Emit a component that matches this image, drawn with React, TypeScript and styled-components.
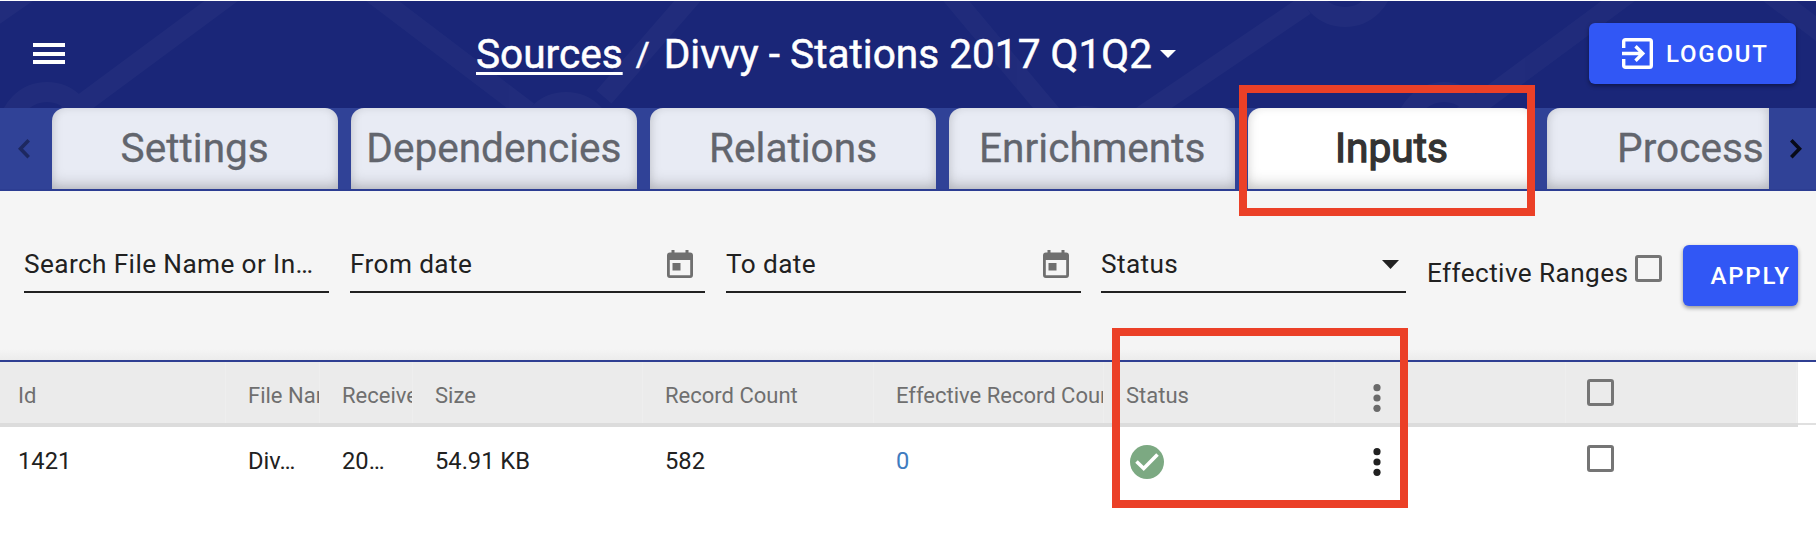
import React from "react";
import styled, { createGlobalStyle } from "styled-components";

const Global = createGlobalStyle`
  * { box-sizing: border-box; }
  body { margin: 0; background: #fff; font-family: Roboto, "Liberation Sans", sans-serif; color: #212121; }
`;

const Page = styled.div`
  position: relative;
  width: 1816px;
  height: 548px;
  overflow: hidden;
  padding-top: 1px;
  background: #fff;
`;

const Header = styled.header`
  position: relative;
  display: flex;
  align-items: center;
  justify-content: space-between;
  height: 107px;
  padding: 0 20px 2px 33px;
  background: #1a2678;
`;

const Pattern = styled.svg`
  position: absolute;
  inset: 0;
`;

const MenuButton = styled.div`
  position: relative;
  display: flex;
  flex-direction: column;
  gap: 4.5px;
  width: 443px;
`;

const MenuBar = styled.span`
  width: 32px;
  height: 4px;
  background: #fff;
`;

const Title = styled.h1`
  position: relative;
  display: flex;
  align-items: center;
  margin: 0;
  flex: 1;
  color: #fff;
  font-size: 40.6px;
  line-height: 48px;
  font-weight: 400;
  white-space: pre;
  -webkit-text-stroke: 0.5px #fff;
`;

const Crumb = styled.a`
  height: 48px;
  text-decoration: underline;
  text-decoration-thickness: 3px;
  text-underline-offset: 4px;
`;

const Slash = styled.span`
  margin: 0 14px 0 13px;
  font-size: 34px;
`;

const Caret = styled.svg`
  margin-left: 8px;
`;

const Button = styled.button<{ $w: number; $pl: number }>`
  position: relative;
  display: flex;
  align-items: center;
  gap: 13px;
  flex: none;
  width: ${(p) => p.$w}px;
  height: 61px;
  padding: 0 0 0 ${(p) => p.$pl}px;
  border: 0;
  border-radius: 6px;
  background: #3157f5;
  color: #fff;
  font: 500 24px/30px Roboto, sans-serif;
  letter-spacing: 1.8px;
  box-shadow: 0 2px 4px rgba(0, 0, 0, 0.4);
`;

const TabBar = styled.nav`
  display: flex;
  height: 83px;
  background: #304297;
  border-bottom: 2px solid #2c3d92;
`;

const Arrow = styled.div<{ $w: number; $pl: number }>`
  display: flex;
  flex: none;
  align-items: center;
  width: ${(p) => p.$w}px;
  padding-left: ${(p) => p.$pl}px;
`;

const TabStrip = styled.div`
  display: flex;
  flex: none;
  gap: 12.8px;
  width: 1717.5px;
  overflow: hidden;
`;

const Tab = styled.div<{ $active?: boolean; $cut?: boolean }>`
  flex: none;
  width: ${(p) => (p.$cut ? 222 : 286.4)}px;
  height: 81px;
  padding-left: ${(p) => (p.$cut ? 64 : 0)}px;
  border-radius: ${(p) => (p.$cut ? "13px 0 0 0" : "13px 13px 0 0")};
  background: ${(p) => (p.$active ? "#fff" : "#e8ebf4")};
  box-shadow: inset 0 -8px 15px -4px rgba(0, 0, 0, 0.2), inset 0 0 10px rgba(0, 0, 0, 0.09);
  color: ${(p) => (p.$active ? "#333" : "#62656d")};
  font-size: 40.6px;
  line-height: 80px;
  text-align: center;
  white-space: nowrap;
  -webkit-text-stroke: ${(p) => (p.$active ? "1.3px #333" : "0.3px #62656d")};
`;

const Filters = styled.section`
  display: flex;
  height: 169px;
  padding: 0 0 0 24px;
  background: linear-gradient(#f5f5f5 158px, #ececec);
`;

const Field = styled.div<{ $w: number; $gap: number }>`
  display: flex;
  align-items: center;
  justify-content: space-between;
  width: ${(p) => p.$w}px;
  height: 56px;
  margin: 46px ${(p) => p.$gap}px 0 0;
  border-bottom: 2px solid #212121;
  font-size: 26.2px;
  letter-spacing: 0.4px;
  line-height: 54px;
  white-space: nowrap;
`;

const IconSlot = styled.span<{ $r: number }>`
  display: flex;
  margin-right: ${(p) => p.$r}px;
`;

const RangeLabel = styled.div`
  width: 208px;
  margin-top: 66px;
  font-size: 26.2px;
  letter-spacing: 0.4px;
  line-height: 32px;
  white-space: nowrap;
`;

const Check = styled.span<{ $top: number }>`
  display: block;
  flex: none;
  width: 27px;
  height: 27px;
  margin-top: ${(p) => p.$top}px;
  border: 3px solid #757575;
  border-radius: 3px;
`;

const ApplySlot = styled.div`
  margin: 54px 0 0 21px;
`;

const Table = styled.div`
  border-top: 2px solid #2f3f92;
`;

const HeadWrap = styled.div`
  height: 63px;
  border-bottom: 2px solid #e0e0e0;
`;

const cols = "226px 94px 93px 230px 231px 230px 231px 231px 231px";

const HeadRow = styled.div`
  display: grid;
  grid-template-columns: ${cols};
  width: 1798px;
  height: 65px;
  background: #ebebeb;
  border-bottom: 4px solid #dcdcdc;
`;

const Row = styled.div`
  display: grid;
  grid-template-columns: ${cols};
  width: 1798px;
  height: 72px;
`;

const HeadCell = styled.div<{ $pl?: number }>`
  display: flex;
  padding-left: ${(p) => p.$pl ?? 22}px;
  overflow: hidden;
  border-right: 1px solid #eeeeee;
  color: #6f6f6f;
  font-size: 22px;
  line-height: 67px;
  white-space: nowrap;
`;

const Cell = styled.div<{ $pl?: number; $link?: boolean }>`
  display: flex;
  padding-left: ${(p) => p.$pl ?? 22}px;
  overflow: hidden;
  color: ${(p) => (p.$link ? "#3f7cbf" : "#212121")};
  font-size: 23.7px;
  line-height: 72px;
  white-space: nowrap;
`;

const Highlight = styled.div<{ $x: number; $y: number; $h: number }>`
  position: absolute;
  left: ${(p) => p.$x}px;
  top: ${(p) => p.$y}px;
  width: 296px;
  height: ${(p) => p.$h}px;
  border: 8px solid #eb4027;
`;

const Chevron = ({ flip, color }: { flip?: boolean; color: string }) => (
  <svg width="12" height="20" viewBox="0 0 12 20" fill="none" stroke={color} strokeWidth="3.6">
    <path d={flip ? "M1.3 1.3 9.5 9.7 1.3 18.2" : "M10.7 1.3 2.5 9.7 10.7 18.2"} />
  </svg>
);

const Calendar = () => (
  <svg width="26" height="28" viewBox="0 0 26 28" fill="none">
    <rect x="1.4" y="4" width="23.2" height="22.6" rx="1.5" stroke="#6f6f6f" strokeWidth="2.8" />
    <path d="M1 3h24v7H1zM4.5 0h3v4h-3zM18.5 0h3v4h-3z" fill="#6f6f6f" />
    <path d="M5.5 13h8v7.5h-8z" fill="#6f6f6f" />
  </svg>
);

const Dots = ({ color }: { color: string }) => (
  <svg width="8" height="28" viewBox="0 0 8 28" fill={color}>
    <circle cx="4" cy="3.7" r="3.6" />
    <circle cx="4" cy="14" r="3.6" />
    <circle cx="4" cy="24.3" r="3.6" />
  </svg>
);

const DotSlot = styled.span<{ $top: number }>`
  display: flex;
  padding-top: ${(p) => p.$top}px;
`;

const tabs = ["Settings", "Dependencies", "Relations", "Enrichments", "Inputs", "Process"];
const heads = ["Id", "File Name", "Received", "Size", "Record Count", "Effective Record Count", "Status"];

export default function App() {
  return (
    <Page>
      <Global />
      <Header>
        <Pattern width="1816" height="107" viewBox="0 1 1816 107">
          <g opacity="0.028" stroke="#fff" strokeWidth="20" fill="none">
            <path d="M31-10 -12 20M63 118 236-10M368-10 528 111.500M604 97 697-10M947-10 1062 127M1122 129.500 1305 5.500M1460 118 1633-10M1765-10 1925 111" />
            <circle cx="47" cy="130.500" r="38.500" />
            <circle cx="566" cy="140.500" r="38.500" />
            <circle cx="1085" cy="154.500" r="38.500" />
            <circle cx="1345" cy="-21.500" r="38.500" />
            <circle cx="1444" cy="130.500" r="38.500" />
          </g>
        </Pattern>
        <MenuButton>
          <MenuBar />
          <MenuBar />
          <MenuBar />
        </MenuButton>
        <Title>
          <Crumb>Sources</Crumb>
          <Slash>/</Slash>
          <span>Divvy - Stations 2017 Q1Q2</span>
          <Caret width="16" height="8" viewBox="0 0 16 8" fill="#fff">
            <path d="M0 0h16L8 8z" />
          </Caret>
        </Title>
        <Button $w={207} $pl={33}>
          <svg width="31" height="31" viewBox="0 0 31 31" fill="none" stroke="#fff">
            <path d="M1.700 10V3.500Q1.700 1.700 3.500 1.700H27.500Q29.300 1.700 29.300 3.500V27.500Q29.300 29.300 27.500 29.300H3.500Q1.700 29.300 1.700 27.500V21" strokeWidth="3.400" />
            <path d="M0 15.500H21M13.500 8.300 20.800 15.500 13.500 22.700" strokeWidth="3.400" />
          </svg>
          LOGOUT
        </Button>
      </Header>
      <TabBar>
        <Arrow $w={51.5} $pl={18}><Chevron color="#1d2860" /></Arrow>
        <TabStrip>
          {tabs.map((t) => (
            <Tab key={t} $active={t === "Inputs"} $cut={t === "Process"}>{t}</Tab>
          ))}
        </TabStrip>
        <Arrow $w={47} $pl={21}><Chevron flip color="#080b18" /></Arrow>
      </TabBar>
      <Filters>
        <Field $w={305} $gap={21}>Search File Name or In…</Field>
        <Field $w={355} $gap={21}>From date<IconSlot $r={12}><Calendar /></IconSlot></Field>
        <Field $w={355} $gap={20}>To date<IconSlot $r={12}><Calendar /></IconSlot></Field>
        <Field $w={305} $gap={21}>
          Status
          <IconSlot $r={7}>
            <svg width="17" height="9" viewBox="0 0 17 9" fill="#212121"><path d="M0 0h17L8.500 9z" /></svg>
          </IconSlot>
        </Field>
        <RangeLabel>Effective Ranges</RangeLabel>
        <Check $top={64} />
        <ApplySlot>
          <Button $w={115} $pl={27.5}>APPLY</Button>
        </ApplySlot>
      </Filters>
      <Table>
        <HeadWrap>
          <HeadRow>
            {heads.map((h, i) => (
              <HeadCell key={h} $pl={i === 0 ? 18 : 22}>{h}</HeadCell>
            ))}
            <HeadCell $pl={38}><DotSlot $top={22}><Dots color="#6a6a6a" /></DotSlot></HeadCell>
            <HeadCell $pl={21}><Check $top={17} /></HeadCell>
          </HeadRow>
        </HeadWrap>
        <Row>
          <Cell $pl={18}>1421</Cell>
          <Cell>Div…</Cell>
          <Cell>20…</Cell>
          <Cell>54.91 KB</Cell>
          <Cell>582</Cell>
          <Cell $link>0</Cell>
          <Cell $pl={26}>
            <DotSlot $top={20}>
              <svg width="34" height="34" viewBox="0 0 34 34">
                <circle cx="17" cy="17" r="17" fill="#7ca982" />
                <path d="M6.500 16.500 13.700 23.500 27.500 9.500" fill="none" stroke="#fff" strokeWidth="3.600" />
              </svg>
            </DotSlot>
          </Cell>
          <Cell $pl={38}><DotSlot $top={23}><Dots color="#212121" /></DotSlot></Cell>
          <Cell $pl={21}><Check $top={20} /></Cell>
        </Row>
      </Table>
      <Highlight $x={1239} $y={85} $h={131} />
      <Highlight $x={1112} $y={328} $h={180} />
    </Page>
  );
}
